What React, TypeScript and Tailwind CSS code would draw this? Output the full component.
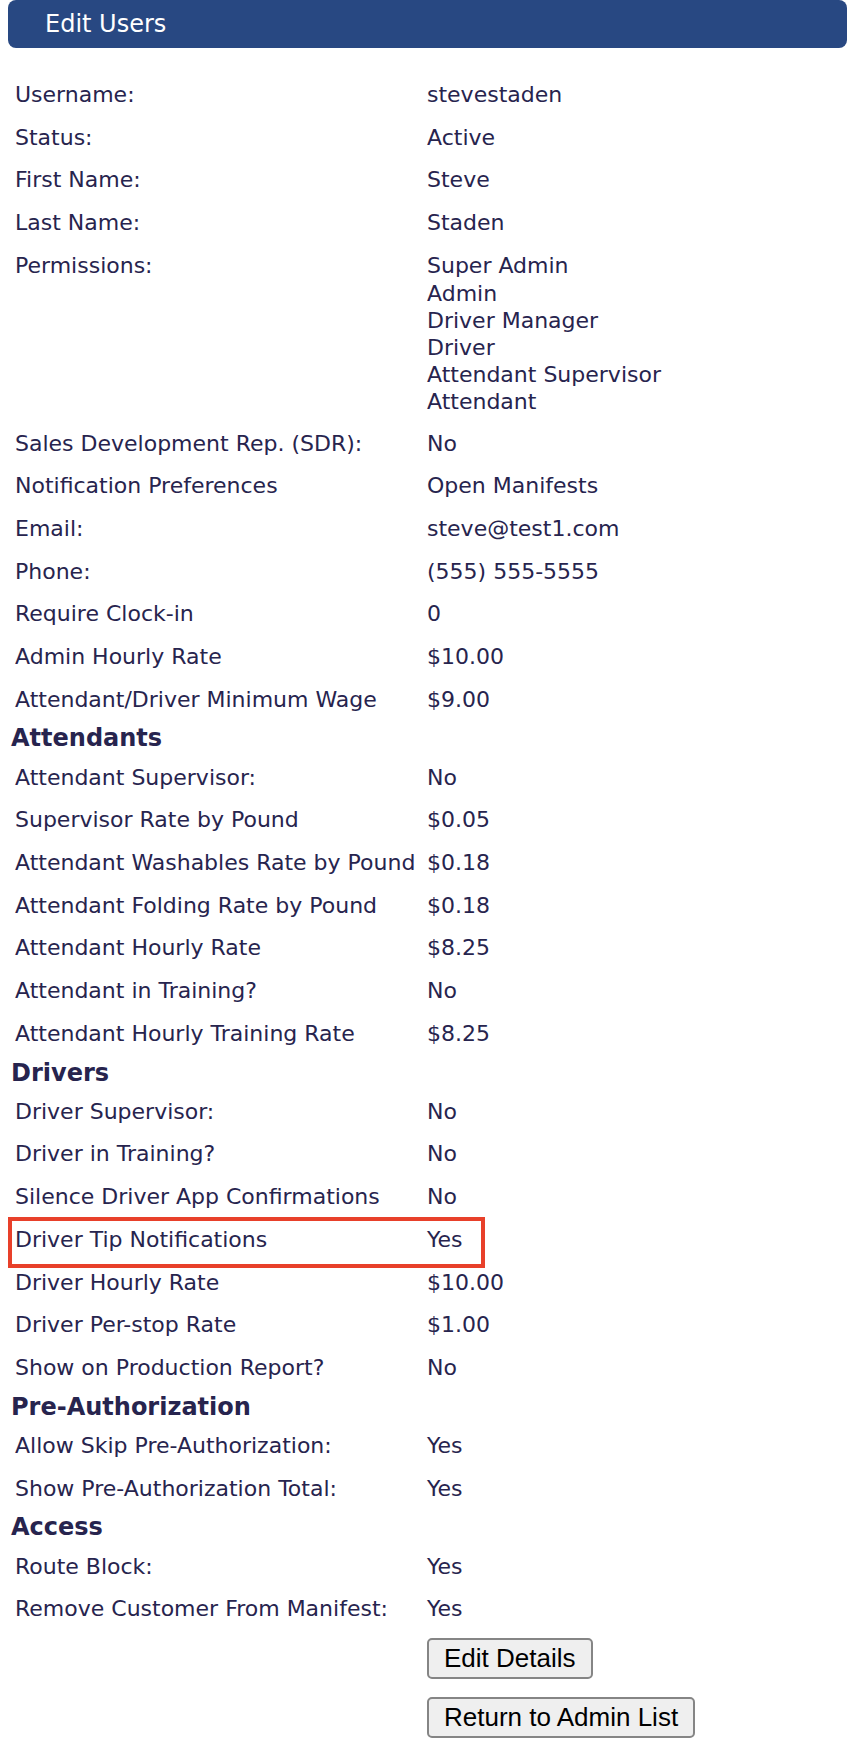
import React from "react";

type Row = { label: string; value: string | string[]; highlight?: boolean };
type Section = { title?: string; rows: Row[] };

const sections: Section[] = [
  {
    rows: [
      { label: "Username:", value: "stevestaden" },
      { label: "Status:", value: "Active" },
      { label: "First Name:", value: "Steve" },
      { label: "Last Name:", value: "Staden" },
      {
        label: "Permissions:",
        value: ["Super Admin", "Admin", "Driver Manager", "Driver", "Attendant Supervisor", "Attendant"],
      },
      { label: "Sales Development Rep. (SDR):", value: "No" },
      { label: "Notification Preferences", value: "Open Manifests" },
      { label: "Email:", value: "steve@test1.com" },
      { label: "Phone:", value: "(555) 555-5555" },
      { label: "Require Clock-in", value: "0" },
      { label: "Admin Hourly Rate", value: "$10.00" },
      { label: "Attendant/Driver Minimum Wage", value: "$9.00" },
    ],
  },
  {
    title: "Attendants",
    rows: [
      { label: "Attendant Supervisor:", value: "No" },
      { label: "Supervisor Rate by Pound", value: "$0.05" },
      { label: "Attendant Washables Rate by Pound", value: "$0.18" },
      { label: "Attendant Folding Rate by Pound", value: "$0.18" },
      { label: "Attendant Hourly Rate", value: "$8.25" },
      { label: "Attendant in Training?", value: "No" },
      { label: "Attendant Hourly Training Rate", value: "$8.25" },
    ],
  },
  {
    title: "Drivers",
    rows: [
      { label: "Driver Supervisor:", value: "No" },
      { label: "Driver in Training?", value: "No" },
      { label: "Silence Driver App Confirmations", value: "No" },
      { label: "Driver Tip Notifications", value: "Yes", highlight: true },
      { label: "Driver Hourly Rate", value: "$10.00" },
      { label: "Driver Per-stop Rate", value: "$1.00" },
      { label: "Show on Production Report?", value: "No" },
    ],
  },
  {
    title: "Pre-Authorization",
    rows: [
      { label: "Allow Skip Pre-Authorization:", value: "Yes" },
      { label: "Show Pre-Authorization Total:", value: "Yes" },
    ],
  },
  {
    title: "Access",
    rows: [
      { label: "Route Block:", value: "Yes" },
      { label: "Remove Customer From Manifest:", value: "Yes" },
    ],
  },
];

function DetailRow({ row }: { row: Row }) {
  const values = Array.isArray(row.value) ? row.value : [row.value];
  return (
    <div className="relative grid grid-cols-[427px_1fr] pt-[9px] pb-[7px] leading-[26.7px]">
      <div className="pl-[15px] whitespace-nowrap">{row.label}</div>
      <div className="flex flex-col">
        {values.map((v, i) => (
          <span key={v} className={values.length > 1 && i > 0 ? "whitespace-nowrap leading-[27px]" : "whitespace-nowrap"}>
            {v}
          </span>
        ))}
      </div>
      {row.highlight && (
        <div className="absolute left-[8px] top-[-1px] w-[477px] h-[51px] border-4 border-[#e8402a]" />
      )}
    </div>
  );
}

export default function App() {
  return (
    <div className="w-[852px] min-h-[1750px] bg-white font-['DejaVu_Sans',Verdana,sans-serif] text-[22px] text-[#27244e]">
      <div className="ml-2 mr-[5px] h-12 flex items-center rounded-lg bg-[#284882] pl-[37px]">
        <h1 className="text-[24px] text-white leading-none">Edit Users</h1>
      </div>

      <div className="pt-[25px]">
        {sections.map((s, i) => (
          <div key={i}>
            {s.title && (
              <div className="pl-[11px] pt-[4px] pb-[2px] text-[24px] font-bold leading-[29.2px]">{s.title}</div>
            )}
            {s.rows.map((r) => (
              <DetailRow key={r.label} row={r} />
            ))}
          </div>
        ))}
      </div>

      <div className="flex flex-col items-start gap-[18px] pl-[427px] pt-[8px] font-['Liberation_Sans',Arial,sans-serif] text-[26px] text-black">
        <button className="h-[41px] px-[15px] rounded-[5px] border-2 border-[#858585] bg-[#efefef] leading-none">
          Edit Details
        </button>
        <button className="h-[41px] px-[15px] rounded-[5px] border-2 border-[#858585] bg-[#efefef] leading-none">
          Return to Admin List
        </button>
      </div>
    </div>
  );
}
